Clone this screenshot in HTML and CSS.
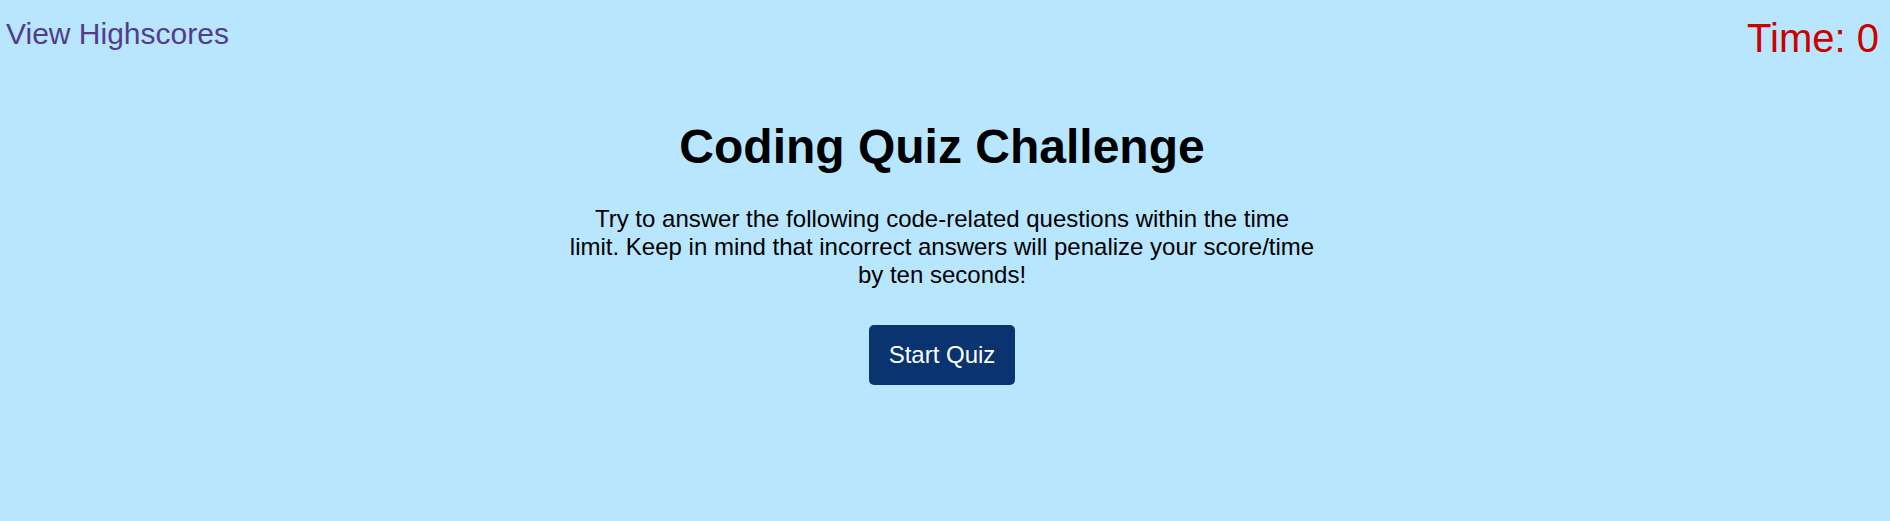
FILE: index.html
```html
<!DOCTYPE html>
<html lang="en">
<head>
<meta charset="utf-8">
<title>Coding Quiz Challenge</title>
<link rel="stylesheet" href="styles.css">
</head>
<body>
<header class="top-bar">
  <a class="highscores-link" href="#">View Highscores</a>
  <div class="timer">Time: <span class="timer-value">0</span></div>
</header>
<main class="intro">
  <h1 class="intro-title">Coding Quiz Challenge</h1>
  <p class="intro-text">Try to answer the following code-related questions within the time limit. Keep in mind that incorrect answers will penalize your score/time by ten seconds!</p>
  <button class="start-button" type="button">Start Quiz</button>
</main>
</body>
</html>
```

FILE: styles.css
```css
html, body {
  margin: 0;
  padding: 0;
}

body {
  background: #b7e6fe;
  font-family: Arial, "Liberation Sans", Helvetica, sans-serif;
  color: #000;
  min-height: 521px;
}

.top-bar {
  display: flex;
  justify-content: space-between;
  align-items: flex-start;
  padding: 17px 11px 0 6px;
}

.highscores-link {
  font-size: 30px;
  color: #553c8b;
  text-decoration: none;
}

.timer {
  font-size: 40px;
  color: #cc0000;
  margin-top: -1px;
}

.intro {
  display: flex;
  flex-direction: column;
  align-items: center;
  text-align: center;
  padding-right: 6px;
}

.intro-title {
  font-size: 48px;
  font-weight: bold;
  margin: 58px 0 0;
}

.intro-text {
  font-size: 24px;
  width: 746px;
  margin: 31px 0 0;
}

.start-button {
  margin-top: 36px;
  font-family: inherit;
  font-size: 24px;
  color: #fff;
  background: #0a3470;
  border: none;
  border-radius: 5px;
  padding: 16px 20px;
  cursor: pointer;
}
```
